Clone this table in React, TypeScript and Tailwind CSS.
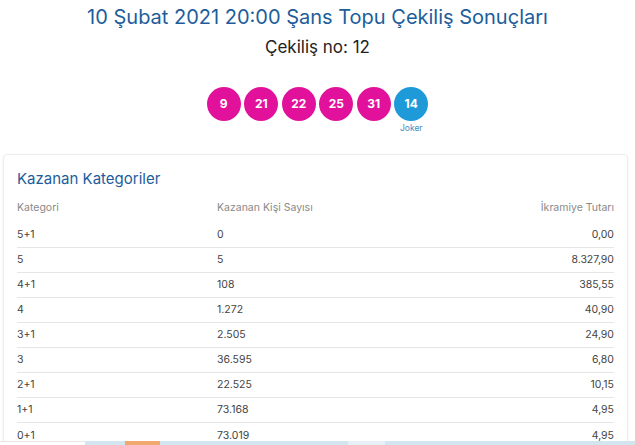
import React from 'react';

const balls = ['9', '21', '22', '25', '31'];

const rows = [
  { cat: '5+1', count: '0', prize: '0,00' },
  { cat: '5', count: '5', prize: '8.327,90' },
  { cat: '4+1', count: '108', prize: '385,55' },
  { cat: '4', count: '1.272', prize: '40,90' },
  { cat: '3+1', count: '2.505', prize: '24,90' },
  { cat: '3', count: '36.595', prize: '6,80' },
  { cat: '2+1', count: '22.525', prize: '10,15' },
  { cat: '1+1', count: '73.168', prize: '4,95' },
  { cat: '0+1', count: '73.019', prize: '4,95' },
];

const App: React.FC = () => {
  return (
    <div className="relative w-[635px] h-[445px] overflow-hidden bg-white font-['Inter',sans-serif]">
      <h1 className="pt-[5px] text-center text-[20px] leading-[24px] text-[#1d5d9b]">
        10 Şubat 2021 20:00 Şans Topu Çekiliş Sonuçları
      </h1>
      <p className="mt-[6px] text-center text-[17px] leading-[24px] text-[#222]">Çekiliş no: 12</p>

      <div className="mt-[28px] flex justify-center gap-[3.5px]">
        {balls.map((b) => (
          <div
            key={b}
            className="w-[34px] h-[34px] rounded-full bg-[#e2119b] flex items-center justify-center text-white text-[12px] font-bold"
          >
            {b}
          </div>
        ))}
        <div className="flex flex-col items-center">
          <div className="w-[34px] h-[34px] rounded-full bg-[#1e9ad8] flex items-center justify-center text-white text-[12px] font-bold">
            14
          </div>
          <span className="mt-[1px] text-[8.5px] leading-[12px] text-[#3d8bc4]">Joker</span>
        </div>
      </div>

      <div className="mt-[20px] ml-[3px] w-[625px] rounded-[4px] border border-[#ececec] shadow-[0_1px_3px_rgba(0,0,0,0.06)] px-[13px] pt-[13px]">
        <h2 className="text-[15px] leading-[22px] text-[#1d5d9b]">Kazanan Kategoriler</h2>
        <div className="mt-[10px] grid grid-cols-[200px_1fr_1fr] text-[10.5px] leading-[16px] text-[#8a8a8a] pb-[7px]">
          <span>Kategori</span>
          <span>Kazanan Kişi Sayısı</span>
          <span className="text-right">İkramiye Tutarı</span>
        </div>
        {rows.map((r, i) => (
          <div
            key={r.cat}
            className={`grid grid-cols-[200px_1fr_1fr] h-[25px] items-center text-[10.5px] text-[#444] ${
              i < rows.length - 1 ? 'border-b border-[#e6e6e6]' : ''
            }`}
          >
            <span>{r.cat}</span>
            <span>{r.count}</span>
            <span className="text-right">{r.prize}</span>
          </div>
        ))}
      </div>

      <div className="absolute left-0 right-0 bottom-0 flex h-[4px]">
        <div className="w-[85px] bg-white border-t border-[#e6e6e6]" />
        <div className="w-[40px] bg-[#d3e5ef]" />
        <div className="w-[35px] bg-[#f0a86e]" />
        <div className="w-[188px] bg-[#d3e5ef]" />
        <div className="w-[37px] bg-[#e6f0f5]" />
        <div className="flex-1 bg-[#d3e5ef]" />
      </div>
    </div>
  );
};

export default App;
